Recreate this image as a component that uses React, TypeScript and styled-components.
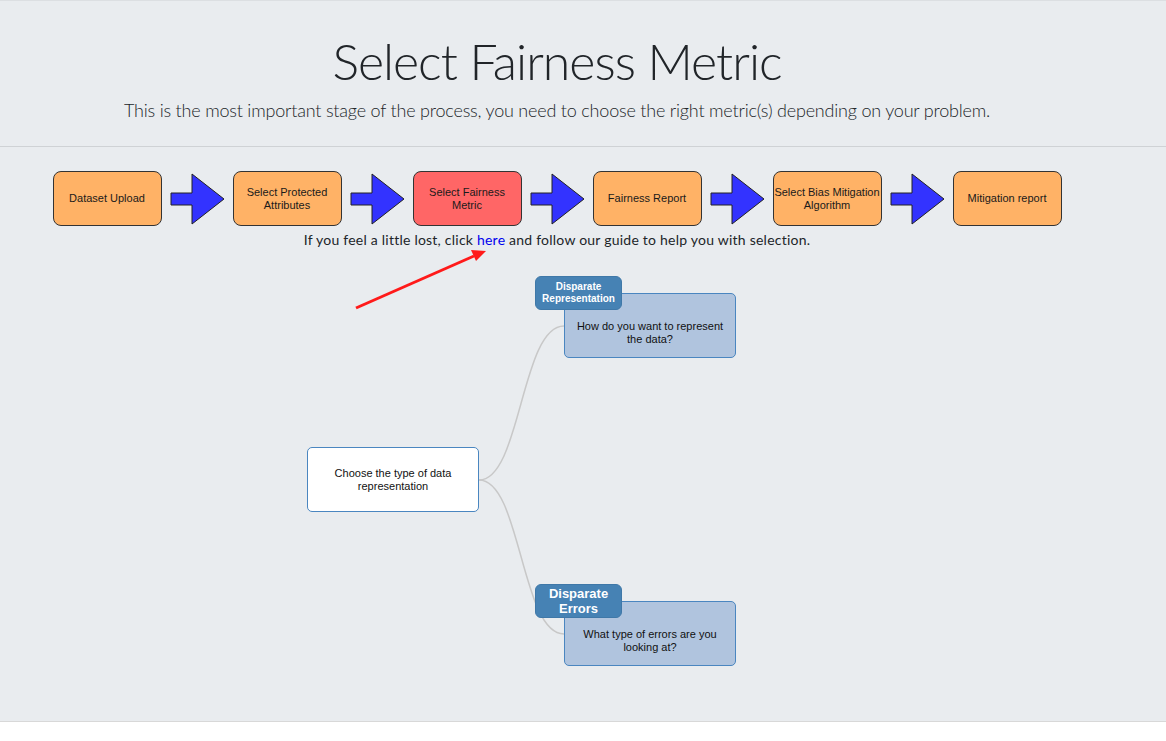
import React from "react";
import styled, { createGlobalStyle } from "styled-components";

const GlobalStyle = createGlobalStyle`
  body {
    margin: 0;
    background: #ffffff;
    font-family: Lato, "Open Sans", sans-serif;
    color: #212529;
  }
`;

const Jumbotron = styled.div`
  height: 720px;
  background: #e9ecef;
  border-top: 1px solid #dcdfe2;
  border-bottom: 1px solid #d8d8d8;
  box-shadow: 0 2px 4px rgba(0, 0, 0, 0.06);
`;

const Header = styled.header`
  width: 1114px;
  padding-top: 30px;
  display: flex;
  flex-direction: column;
  align-items: center;
`;

const Title = styled.h1`
  margin: 0;
  font-family: Lato, sans-serif;
  font-weight: 300;
  font-size: 50px;
  letter-spacing: -1px;
  line-height: 60px;
  color: #212529;
`;

const Lead = styled.p`
  margin: 6px 0 0;
  font-family: Lato, sans-serif;
  font-weight: 300;
  font-size: 18px;
  letter-spacing: -0.2px;
  line-height: 27px;
`;

const Rule = styled.hr`
  margin: 22px 0 0;
  border: 0;
  border-top: 1px solid #cfd2d5;
`;

const Steps = styled.div`
  width: 1114px;
  margin-top: 24px;
  display: flex;
  justify-content: center;
  align-items: center;
  gap: 8px;
`;

const Step = styled.div<{ $active?: boolean }>`
  width: 109px;
  height: 55px;
  box-sizing: border-box;
  border: 1px solid #333;
  border-radius: 8px;
  background: ${(p) => (p.$active ? "#ff6666" : "#ffb266")};
  display: flex;
  align-items: center;
  justify-content: center;
  text-align: center;
  font-family: "Liberation Sans", Arial, sans-serif;
  font-size: 11px;
  line-height: 13px;
  color: #1a1a1a;
`;

const Guide = styled.p`
  width: 1114px;
  margin: 3px 0 0;
  text-align: center;
  font-family: Lato, sans-serif;
  font-size: 14px;
  letter-spacing: 0.23px;
  line-height: 21px;
  color: #212529;

  a {
    color: #0000ee;
    text-decoration: none;
  }
`;

const Diagram = styled.div`
  position: relative;
  height: 470px;
`;

const Links = styled.svg`
  position: absolute;
  left: 0;
  top: 0;
`;

const Node = styled.div<{ $x: number; $y: number; $child?: boolean }>`
  position: absolute;
  left: ${(p) => p.$x}px;
  top: ${(p) => p.$y}px;
  width: 172px;
  height: 65px;
  box-sizing: border-box;
  padding: ${(p) => (p.$child ? "15px 6px 0" : "0 10px")};
  border: 1px solid #4a86c0;
  border-radius: 5px;
  background: ${(p) => (p.$child ? "#b0c4de" : "#ffffff")};
  display: flex;
  align-items: center;
  justify-content: center;
  text-align: center;
  font-family: "Liberation Sans", Arial, sans-serif;
  font-size: 11px;
  line-height: 13px;
  color: #111;
`;

const Tab = styled.div<{ $x: number; $y: number; $big?: boolean }>`
  position: absolute;
  left: ${(p) => p.$x}px;
  top: ${(p) => p.$y}px;
  width: 87px;
  height: 34px;
  box-sizing: border-box;
  border: 1px solid #3f78a8;
  border-radius: 6px;
  background: #4682b4;
  display: flex;
  align-items: center;
  justify-content: center;
  text-align: center;
  font-family: "Liberation Sans", Arial, sans-serif;
  font-weight: bold;
  font-size: ${(p) => (p.$big ? "13px" : "10px")};
  line-height: ${(p) => (p.$big ? "15px" : "12px")};
  color: #ffffff;
`;

const Arrow = () => (
  <svg width="55" height="52" viewBox="0 0 55 52">
    <path
      d="M1 20 L22 20 L22 1 L54 26 L22 51 L22 32 L1 32 Z"
      fill="#3333ff"
      stroke="#222"
      strokeWidth="1"
    />
  </svg>
);

const steps = [
  { label: "Dataset Upload" },
  { label: "Select Protected Attributes" },
  { label: "Select Fairness Metric", active: true },
  { label: "Fairness Report" },
  { label: "Select Bias Mitigation Algorithm" },
  { label: "Mitigation report" },
];

export default function App() {
  return (
    <>
      <GlobalStyle />
      <Jumbotron>
        <Header>
          <Title>Select Fairness Metric</Title>
          <Lead>
            This is the most important stage of the process, you need to choose the right
            metric(s) depending on your problem.
          </Lead>
        </Header>
        <Rule />
        <Steps>
          {steps.map((s, i) => (
            <React.Fragment key={s.label}>
              {i > 0 && <Arrow />}
              <Step $active={s.active}>{s.label}</Step>
            </React.Fragment>
          ))}
        </Steps>
        <Guide>
          If you feel a little lost, click <a href="#">here</a> and follow our guide to help you
          with selection.
        </Guide>
        <Diagram>
          <Links width="1166" height="470">
            <path
              d="M479 230 C521 230 521 76 564 76"
              fill="none"
              stroke="#c8c8c8"
              strokeWidth="1.5"
            />
            <path
              d="M479 230 C521 230 521 384 564 384"
              fill="none"
              stroke="#c8c8c8"
              strokeWidth="1.5"
            />
            <line x1="356" y1="58" x2="474" y2="6" stroke="#ff1a1a" strokeWidth="3" />
            <path d="M486 1 L471 0 L476 11 Z" fill="#ff1a1a" />
          </Links>
          <Node $x={307} $y={197}>Choose the type of data representation</Node>
          <Node $x={564} $y={43} $child>
            How do you want to represent the data?
          </Node>
          <Tab $x={535} $y={26}>
            Disparate Representation
          </Tab>
          <Node $x={564} $y={351} $child>
            What type of errors are you looking at?
          </Node>
          <Tab $x={535} $y={334} $big>
            Disparate Errors
          </Tab>
        </Diagram>
      </Jumbotron>
    </>
  );
}
